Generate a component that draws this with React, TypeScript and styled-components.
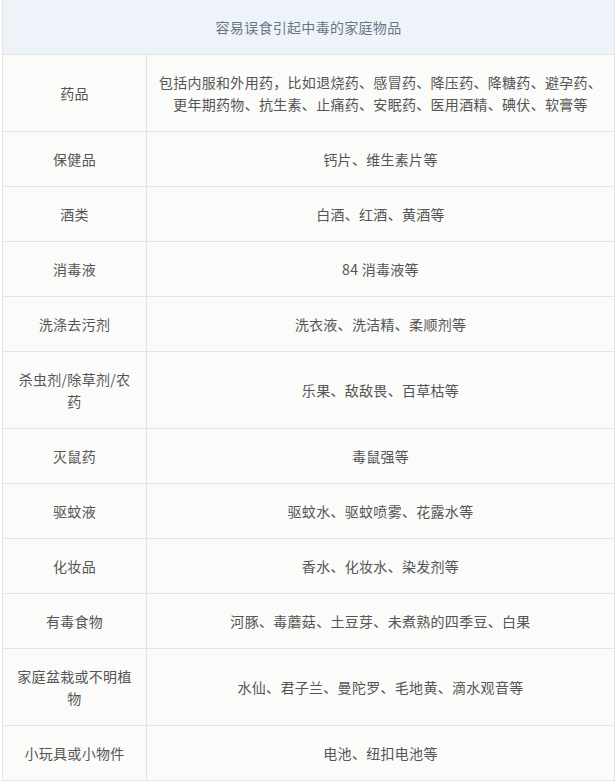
import React from 'react';
import styled, { createGlobalStyle } from 'styled-components';

const GlobalStyle = createGlobalStyle`
  body {
    margin: 0;
    background: #ffffff;
    font-family: "Noto Sans CJK SC", "Noto Sans", sans-serif;
  }
`;

const Wrapper = styled.div`
  padding: 0 1px 0 2px;
`;

const Table = styled.table`
  width: 613px;
  border-collapse: collapse;
  table-layout: fixed;
  font-size: 14px;
  line-height: 22px;
  letter-spacing: 0.3px;
  color: #555555;
  background: #fbfbfa;
`;

const HeadCell = styled.th`
  height: 54px;
  padding: 0 10px;
  font-weight: normal;
  color: #6a7686;
  background: #eef3fa;
  border: 1px solid #e2e4e8;
  border-top: none;
  text-align: center;
`;

const Cell = styled.td<{ $narrow?: boolean }>`
  padding: ${(p) => (p.$narrow ? '16px 14px' : '16px 10px')};
  border: 1px solid #e4e4e4;
  text-align: center;
  vertical-align: middle;
`;

const rows: [string, string][] = [
  ['药品', '包括内服和外用药，比如退烧药、感冒药、降压药、降糖药、避孕药、更年期药物、抗生素、止痛药、安眠药、医用酒精、碘伏、软膏等'],
  ['保健品', '钙片、维生素片等'],
  ['酒类', '白酒、红酒、黄酒等'],
  ['消毒液', '84 消毒液等'],
  ['洗涤去污剂', '洗衣液、洗洁精、柔顺剂等'],
  ['杀虫剂/除草剂/农药', '乐果、敌敌畏、百草枯等'],
  ['灭鼠药', '毒鼠强等'],
  ['驱蚊液', '驱蚊水、驱蚊喷雾、花露水等'],
  ['化妆品', '香水、化妆水、染发剂等'],
  ['有毒食物', '河豚、毒蘑菇、土豆芽、未煮熟的四季豆、白果'],
  ['家庭盆栽或不明植物', '水仙、君子兰、曼陀罗、毛地黄、滴水观音等'],
  ['小玩具或小物件', '电池、纽扣电池等'],
];

const App: React.FC = () => (
  <Wrapper>
    <GlobalStyle />
    <Table>
      <colgroup>
        <col style={{ width: 144 }} />
        <col />
      </colgroup>
      <thead>
        <tr>
          <HeadCell colSpan={2}>容易误食引起中毒的家庭物品</HeadCell>
        </tr>
      </thead>
      <tbody>
        {rows.map(([name, detail]) => (
          <tr key={name}>
            <Cell $narrow>{name}</Cell>
            <Cell>{detail}</Cell>
          </tr>
        ))}
      </tbody>
    </Table>
  </Wrapper>
);

export default App;
